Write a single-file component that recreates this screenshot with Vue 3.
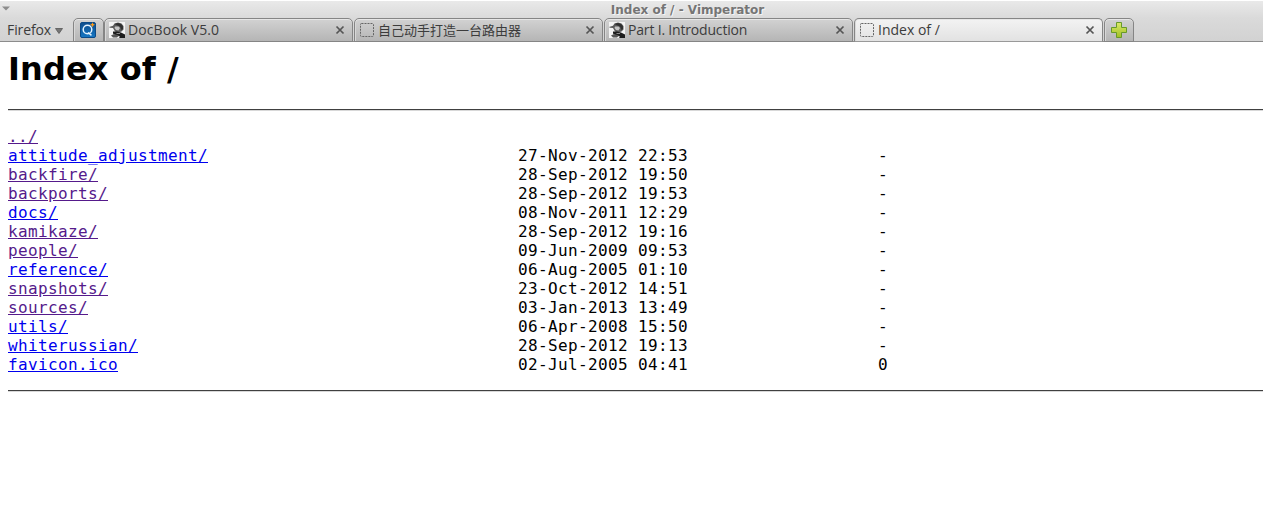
<script setup>
const tabs = [
  { title: 'DocBook V5.0', icon: 'duck', fit: 'loose' },
  { title: '自己动手打造一台路由器', icon: 'blank', fit: 'cjk' },
  { title: 'Part I. Introduction', icon: 'duck', fit: 'tight' },
  { title: 'Index of /', icon: 'blank', active: true },
]
const entries = [
  { name: '../', visited: true, date: '', size: '' },
  { name: 'attitude_adjustment/', date: '27-Nov-2012 22:53', size: '-' },
  { name: 'backfire/', visited: true, date: '28-Sep-2012 19:50', size: '-' },
  { name: 'backports/', visited: true, date: '28-Sep-2012 19:53', size: '-' },
  { name: 'docs/', date: '08-Nov-2011 12:29', size: '-' },
  { name: 'kamikaze/', visited: true, date: '28-Sep-2012 19:16', size: '-' },
  { name: 'people/', visited: true, date: '09-Jun-2009 09:53', size: '-' },
  { name: 'reference/', date: '06-Aug-2005 01:10', size: '-' },
  { name: 'snapshots/', visited: true, date: '23-Oct-2012 14:51', size: '-' },
  { name: 'sources/', visited: true, date: '03-Jan-2013 13:49', size: '-' },
  { name: 'utils/', date: '06-Apr-2008 15:50', size: '-' },
  { name: 'whiterussian/', date: '28-Sep-2012 19:13', size: '-' },
  { name: 'favicon.ico', date: '02-Jul-2005 04:41', size: '0' },
]
</script>

<template>
  <div class="window">
    <header class="chrome">
      <div class="titlebar">
        <svg class="winmenu" width="8" height="5" viewBox="0 0 8 5"><path d="M0 .5H8L4 4.5Z" fill="#8c8c8c" /></svg>
        <span class="title">Index of / - Vimperator</span>
      </div>
      <div class="tabbar">
        <div class="menu">
          <span>Firefox</span>
          <svg width="8" height="6" viewBox="0 0 8 6"><path d="M.5 .5H7.500L4 5.500Z" fill="#777" stroke="#555" stroke-width=".8" /></svg>
        </div>
        <div class="tab pinned">
          <svg width="16" height="16" viewBox="0 0 16 16">
            <defs>
              <linearGradient id="blue" x1="0" y1="0" x2="0" y2="1"><stop offset="0" stop-color="#0c4c8c" /><stop offset="1" stop-color="#1677c4" /></linearGradient>
            </defs>
            <rect x=".5" y=".5" width="15" height="15" rx="1.500" fill="url(#blue)" stroke="#0b4a88" />
            <circle cx="7.500" cy="7.500" r="4.300" fill="none" stroke="#e4f3ff" stroke-width="1.500" />
            <path d="M8 10.500L11.500 13.300" stroke="#e4f3ff" stroke-width="1.500" />
            <path d="M12.500 .3L13.300 2L15 2.700L13.300 3.500L12.500 5.200L11.700 3.500L10 2.700L11.700 2Z" fill="#ff9b16" />
          </svg>
        </div>
        <div v-for="t in tabs" :key="t.title" class="tab page" :class="{ active: t.active }">
          <svg v-if="t.icon === 'duck'" class="icon" width="16" height="16" viewBox="0 0 16 16">
            <rect width="16" height="16" fill="#f4f4f4" />
            <path d="M0 5L4 3.800L5.500 1.500L9 .5L12.500 1.500L14.500 4V7.500L12.500 9.500L9 10.500L6 9.500L4 6L1 5.800Z" fill="#5a5a5a" />
            <path d="M5.500 2L9 1L12 2L14 4.500V7L12.500 8L11 4.500L8.500 3.500Z" fill="#303030" />
            <path d="M6 4.500H9.500L11 6L9.500 8.500L7 8L5.500 6Z" fill="#c4c4c4" />
            <path d="M4 9.500L8 9.500L12 10.500L16 12.500V16H10L11 14.500L7 13.500L4 11.500Z" fill="#1c1c1c" />
            <path d="M2 13.500L5 12L10 13.500L8 15.500H4Z" fill="#555" />
            <path d="M7 11H11V12H8Z" fill="#888" />
          </svg>
          <svg v-else class="icon" width="16" height="16" viewBox="0 0 16 16">
            <rect x="1.500" y="1.500" width="13" height="13" rx="1" fill="none" stroke="#666" stroke-dasharray="2 1" />
          </svg>
          <span class="label" :class="t.fit">{{ t.title }}</span>
          <svg class="close" width="10" height="10" viewBox="0 0 10 10"><path d="M1.500 1.500L8.500 8.500M8.500 1.500L1.500 8.500" stroke="#555" stroke-width="1.700" /></svg>
        </div>
        <div class="tab add">
          <svg width="16" height="16" viewBox="0 0 16 16">
            <defs>
              <linearGradient id="green" x1="0" y1="0" x2="0" y2="1"><stop offset="0" stop-color="#dbe96a" /><stop offset="1" stop-color="#a0bf25" /></linearGradient>
            </defs>
            <path d="M5.500 .5H10.500V5.500H15.500V10.500H10.500V15.500H5.500V10.500H.5V5.500H5.500Z" fill="url(#green)" stroke="#679a28" />
          </svg>
        </div>
      </div>
    </header>
    <main>
      <h1>Index of /</h1>
      <hr>
      <div class="listing">
        <div v-for="e in entries" :key="e.name" class="row">
          <span><a :class="{ visited: e.visited }">{{ e.name }}</a></span>
          <span>{{ e.date }}</span>
          <span>{{ e.size }}</span>
        </div>
      </div>
      <hr>
    </main>
  </div>
</template>

<style>
body { margin: 0; background: #fff; overflow: hidden; }
</style>

<style scoped>
.window { width: 100%; height: 508px; overflow: hidden; }
.chrome {
  box-sizing: border-box;
  height: 42px;
  border-bottom: 1px solid #8c8c8c;
  background: linear-gradient(#fff 0, #fff 1px, #e9e9e9 1px, #dadada 18px, #d2d2d2 41px);
  color: #3c3c3c;
  font: 14px "Open Sans", "Noto Sans CJK SC", sans-serif;
}
.titlebar { position: relative; height: 18px; }
.winmenu { position: absolute; left: 2px; top: 6px; }
.title {
  display: block;
  padding-left: 112px;
  text-align: center;
  color: #757575;
  font: bold 12px/20px "DejaVu Sans", sans-serif;
  text-shadow: 1px 1px #f5f5f5;
  white-space: nowrap;
}
.tabbar { display: flex; height: 24px; }
.menu { display: flex; width: 72px; align-items: center; line-height: 22px; }
.menu span { width: 48px; padding-left: 7px; letter-spacing: -0.1px; }
.menu svg { margin-top: 2px; }
.tab {
  box-sizing: border-box;
  display: flex;
  align-items: center;
  height: 24px;
  border: 1px solid #858585;
  border-radius: 5px 5px 0 0;
  background: linear-gradient(#d2d2d2, #b5b5b5);
  box-shadow: inset 0 1px #e6e6e6, inset 1px 0 #d8d8d8;
}
.pinned { width: 31px; margin-left: 1px; padding-right: 2px; justify-content: center; }
.page { width: 249px; margin-left: 1px; padding: 0 7px 0 4px; }
.pinned + .page { margin-left: 0; }
.active { background: linear-gradient(#f3f3f3, #e2e2e2); border-bottom-color: #999; }
.icon { flex: none; }
.label { flex: 1; margin-left: 3px; line-height: 22px; white-space: nowrap; }
.cjk { font-family: "Noto Sans CJK SC", sans-serif; font-size: 13px; }
.tight { letter-spacing: -0.18px; }
.loose { letter-spacing: 0.08px; }
.add { width: 30px; margin-left: 1px; justify-content: center; }
main { padding-left: 8px; color: #000; }
h1 { margin: 8px 0 21px; font: bold 32px/38px "DejaVu Sans", sans-serif; letter-spacing: 0.1px; }
hr { height: 1px; margin: 0; border: 0; border-top: 1px solid #404040; background: #d8d8d8; }
.listing {
  padding: 16px 0;
  font: 16px/19px "DejaVu Sans Mono", monospace;
  letter-spacing: 0.367px;
}
.row { display: grid; grid-template-columns: 510px 360px 1fr; height: 19px; white-space: pre; }
a { color: #00e; text-decoration: underline; cursor: pointer; }
.visited { color: #551a8b; }
</style>
